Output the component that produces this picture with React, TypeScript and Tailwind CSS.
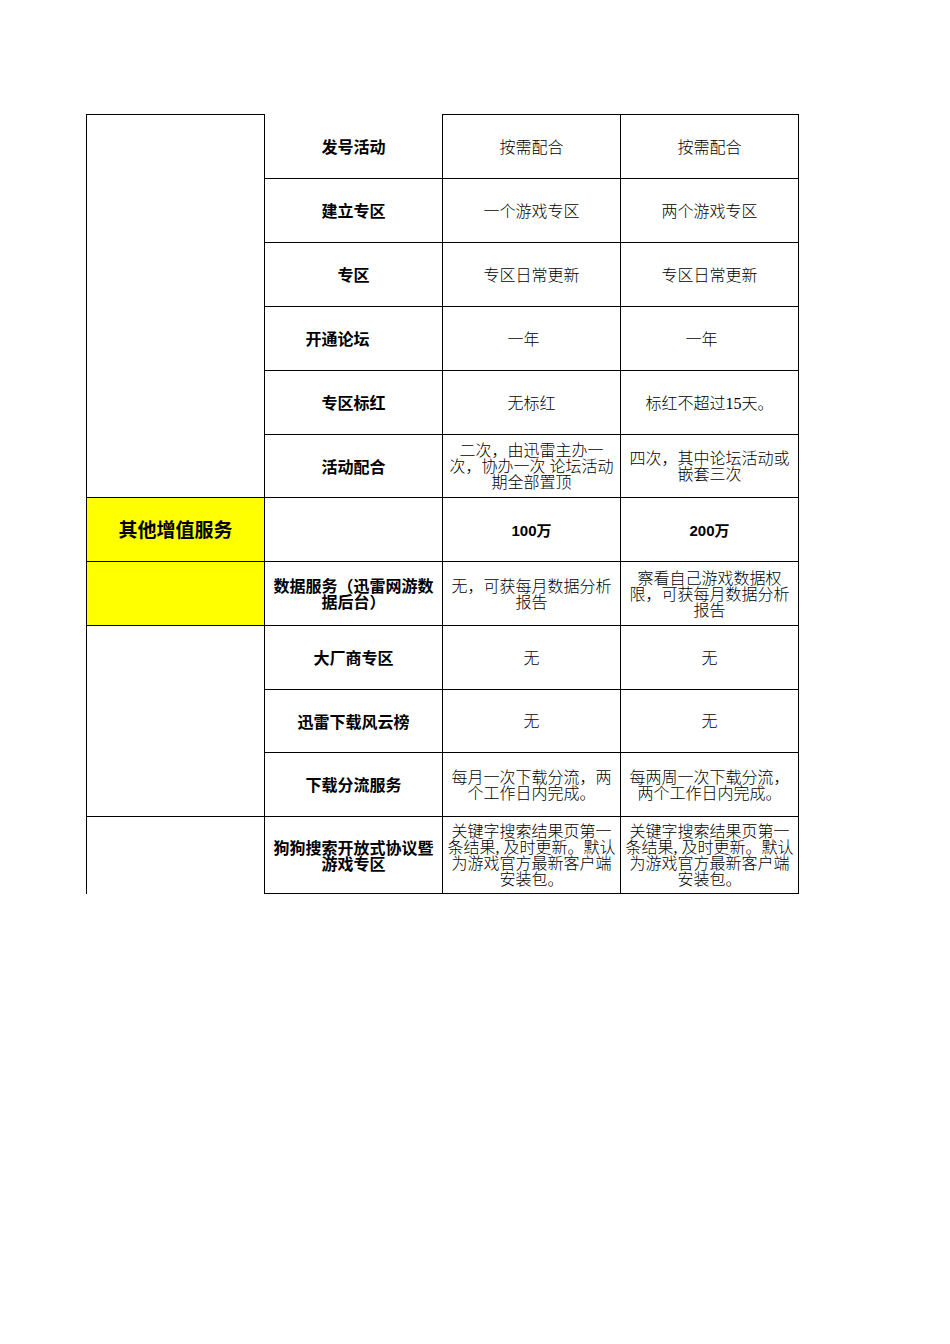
import React from 'react';

type Cell = string | string[];

// 每行：名称、方案一、方案二
const rows: { label: Cell; a: Cell; b: Cell; bold?: boolean; shift?: boolean }[] = [
  { label: '发号活动', a: '按需配合', b: '按需配合' },
  { label: '建立专区', a: '一个游戏专区', b: '两个游戏专区' },
  { label: '专区', a: '专区日常更新', b: '专区日常更新' },
  { label: '开通论坛', a: '一年', b: '一年', shift: true },
  { label: '专区标红', a: '无标红', b: '标红不超过15天。' },
  {
    label: '活动配合',
    a: ['二次，由迅雷主办一', '次，协办一次 论坛活动', '期全部置顶'],
    b: ['四次，其中论坛活动或', '嵌套三次'],
  },
  { label: '', a: '100万', b: '200万', bold: true },
  {
    label: ['数据服务（迅雷网游数', '据后台）'],
    a: ['无，可获每月数据分析', '报告'],
    b: ['察看自己游戏数据权', '限，可获每月数据分析', '报告'],
  },
  { label: '大厂商专区', a: '无', b: '无' },
  { label: '迅雷下载风云榜', a: '无', b: '无' },
  {
    label: '下载分流服务',
    a: ['每月一次下载分流，两', '个工作日内完成。'],
    b: ['每两周一次下载分流，', '两个工作日内完成。'],
  },
  {
    label: ['狗狗搜索开放式协议暨', '游戏专区'],
    a: ['关键字搜索结果页第一', '条结果, 及时更新。默认', '为游戏官方最新客户端', '安装包。'],
    b: ['关键字搜索结果页第一', '条结果, 及时更新。默认', '为游戏官方最新客户端', '安装包。'],
  },
];

const rowStart = [
  'row-start-1', 'row-start-2', 'row-start-3', 'row-start-4', 'row-start-5', 'row-start-6',
  'row-start-7', 'row-start-8', 'row-start-9', 'row-start-10', 'row-start-11', 'row-start-12',
];

const sans = { fontFamily: '"Liberation Sans", "Noto Sans CJK SC", sans-serif' };
const serif = { fontFamily: '"Liberation Serif", "Noto Sans CJK SC", serif' };

const Lines = ({ v }: { v: Cell }) =>
  Array.isArray(v) ? (
    <div>
      {v.map((l, i) => (
        <div key={i} className="whitespace-nowrap">{l}</div>
      ))}
    </div>
  ) : (
    <div className="whitespace-nowrap">{v}</div>
  );

export default function App() {
  const last = rows.length - 1;
  return (
    <div className="min-h-[1344px] w-[950px] bg-white pt-[114px] pl-[86px] text-black">
      <div className="grid grid-cols-[178px_178px_178px_179px] grid-rows-[64px_64px_64px_64px_64px_63px_64px_64px_64px_63px_64px_78px] text-[16px] leading-[16px]">
        {/* 左侧分组列 */}
        <div className="col-start-1 row-start-1 row-span-6 border-l border-t border-black" />
        <div
          className="col-start-1 row-start-7 flex items-center justify-center border-l border-t border-black bg-[#ffff00] pt-[2px] text-[19px] font-bold"
          style={sans}
        >
          其他增值服务
        </div>
        <div className="col-start-1 row-start-8 border-l border-t border-black bg-[#ffff00]" />
        <div className="col-start-1 row-start-9 row-span-3 border-l border-t border-black" />
        <div className="col-start-1 row-start-12 border-l border-t border-black" />

        {rows.map((r, i) => (
          <React.Fragment key={i}>
            <div
              className={`col-start-2 ${rowStart[i]} flex items-center justify-center border-l border-black pt-[3px] text-center font-semibold ${i === 0 ? '' : 'border-t'} ${i === last ? 'border-b' : ''} ${r.shift ? 'pr-[32px]' : ''}`}
              style={sans}
            >
              <Lines v={r.label} />
            </div>
            <div
              className={`col-start-3 ${rowStart[i]} flex items-center justify-center border-l border-t border-black pt-[2px] text-center ${i === last ? 'border-b' : ''} ${r.bold ? 'font-bold text-[15px]' : 'font-light'} ${r.shift ? 'pr-[16px]' : ''}`}
              style={r.bold ? sans : serif}
            >
              <Lines v={r.a} />
            </div>
            <div
              className={`col-start-4 ${rowStart[i]} flex items-center justify-center border-l border-r border-t border-black pt-[2px] text-center ${i === last ? 'border-b' : ''} ${r.bold ? 'font-bold text-[15px]' : 'font-light'} ${r.shift ? 'pr-[16px]' : ''}`}
              style={r.bold ? sans : serif}
            >
              <Lines v={r.b} />
            </div>
          </React.Fragment>
        ))}
      </div>
    </div>
  );
}
